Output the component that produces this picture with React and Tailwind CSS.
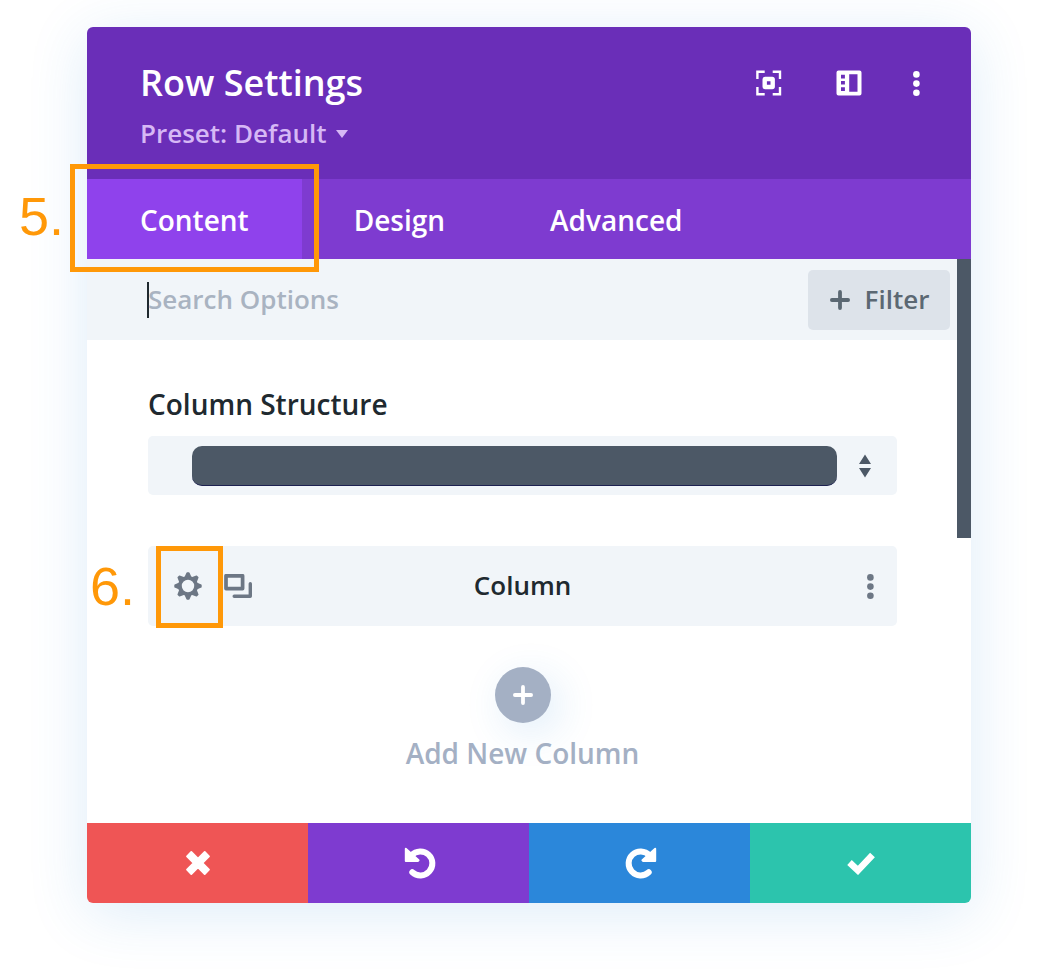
const tabs = ["Content", "Design", "Advanced"]

function Dots({ className }) {
  return (
    <svg className={className} viewBox="0 0 8 26" fill="currentColor" aria-hidden="true">
      <circle cx="4.4" cy="4.4" r="3.3" />
      <circle cx="4.4" cy="13.6" r="3.3" />
      <circle cx="4.4" cy="22.7" r="3.3" />
    </svg>
  )
}

function ExpandIcon() {
  return (
    <svg className="h-[26px] w-[26px]" viewBox="0 0 26 26" fill="none" stroke="currentColor" aria-hidden="true">
      <path strokeWidth="2.4" d="M1.4 9V1.7H8.7M16.7 1.7h7.3V9M24 17v7.3H16.7M8.7 24.3H1.4V17" />
      <rect x="8.7" y="9" width="8" height="8" rx="0.5" strokeWidth="4.4" strokeLinejoin="round" />
    </svg>
  )
}

function SidebarIcon() {
  return (
    <svg className="h-[26px] w-[26px]" viewBox="0 0 26 26" fill="currentColor" aria-hidden="true">
      <path
        fillRule="evenodd"
        d="M2.5 0.5h21a2 2 0 0 1 2 2v21a2 2 0 0 1-2 2h-21a2 2 0 0 1-2-2v-21a2 2 0 0 1 2-2zM13.2 4.3v17.4h8.3V4.3zM5 4.8v3.6h3.9V4.8zM5 11v3.6h3.9V11zM5 17.3v3.6h3.9v-3.6z"
      />
    </svg>
  )
}

function GearIcon() {
  const teeth = [0, 45, 90, 135, 180, 225, 270, 315]
  return (
    <svg className="h-7 w-7" viewBox="-14 -14 28 28" fill="none" stroke="currentColor" aria-hidden="true">
      <circle r="8.1" strokeWidth="3.8" />
      {teeth.map((angle) => (
        <path
          key={angle}
          d="M-2.7 -9L-0.9 -13H0.9L2.7 -9Z"
          fill="currentColor"
          strokeWidth="1.4"
          strokeLinejoin="round"
          transform={`rotate(${angle})`}
        />
      ))}
    </svg>
  )
}

function DuplicateIcon() {
  return (
    <svg className="h-6 w-7" viewBox="0 0 28 24" fill="none" stroke="currentColor" aria-hidden="true">
      <rect x="2" y="1.8" width="16.6" height="12.8" strokeWidth="3.7" strokeLinejoin="round" />
      <path d="M26.3 9.8v12.5H10.2" strokeWidth="3.4" strokeLinecap="round" strokeLinejoin="round" />
    </svg>
  )
}

function PlusIcon() {
  return (
    <svg className="h-5 w-5" viewBox="0 0 20 20" fill="none" stroke="currentColor" aria-hidden="true">
      <path d="M10 1.9v16.2M1.9 10h16.2" strokeWidth="3.8" strokeLinecap="round" />
    </svg>
  )
}

function UndoIcon({ className }) {
  return (
    <svg className={className} viewBox="0 0 32 32" fill="none" stroke="currentColor" aria-hidden="true">
      <path d="M7.6 8.2A12 12 0 1 1 8.3 25.3" strokeWidth="6" strokeLinecap="round" />
      <path
        d="M1.8 1.8L14.6 13.2L13.8 13.9H1.8Z"
        fill="currentColor"
        strokeWidth="2"
        strokeLinejoin="round"
      />
    </svg>
  )
}

export default function App() {
  return (
    <div className="relative h-[980px] w-[1044px] overflow-hidden bg-white pt-[27px] pl-[87px] font-['Open_Sans',sans-serif] text-[28px] font-semibold">
      <div className="flex h-[876px] w-[884px] flex-col overflow-hidden rounded-[6px] bg-white shadow-[0_10px_60px_rgba(43,135,218,0.16)]">
        <header className="flex h-[152px] shrink-0 justify-between bg-[#6a2eb8] pr-[51px] pl-[53px] text-white">
          <div className="pt-[31px]">
            <h1 className="text-[36px] leading-[50px]">Row Settings</h1>
            <button className="flex items-center text-[26px] leading-[50px] text-[#d6b8f5]">
              Preset: Default
              <svg className="mt-px ml-[9px] h-2 w-3" viewBox="0 0 12 8" fill="currentColor" aria-hidden="true">
                <path d="M0 0h12L6 8z" />
              </svg>
            </button>
          </div>
          <div className="mt-[43px] flex h-[26px] items-center">
            <ExpandIcon />
            <span className="w-[54px]" />
            <SidebarIcon />
            <span className="w-[50px]" />
            <Dots className="h-[26px] w-2" />
          </div>
        </header>

        <nav className="flex h-20 shrink-0 bg-[#7e3bd0] text-white">
          {tabs.map((tab, i) => (
            <button
              key={tab}
              className={i === 0 ? "bg-[#8f42ec] pt-0.5 pr-[53px] pl-[53px]" : "pt-0.5 pr-[53px] pl-[52px]"}
            >
              {tab}
            </button>
          ))}
        </nav>

        <div className="flex h-[564px] shrink-0">
          <main className="w-[870px]">
            <div className="flex h-[81px] items-center justify-between bg-[#f1f5f9] pr-[7px] pl-[60px]">
              <div className="flex items-center text-[26px] text-[#a9b3c1]">
                <span className="h-9 w-0.5 bg-[#20292f]" />
                <span className="-ml-px">Search Options</span>
              </div>
              <button className="flex h-[60px] w-[142px] items-center justify-center gap-[15px] rounded-[5px] bg-[#dde3ea] pl-px text-[26px] text-[#5b6873]">
                <PlusIcon />
                Filter
              </button>
            </div>

            <section className="flex flex-col pr-[60px] pl-[61px] pt-11">
              <h2 className="h-[52px] leading-[41px] text-[#20292f]">Column Structure</h2>
              <div className="flex h-[59px] items-center rounded-[5px] bg-[#f1f5f9] pl-11">
                <div className="h-10 w-[645px] rounded-[10px] border-b border-[#1d2150] bg-[#4c5866]" />
                <svg className="ml-[22px] h-6 w-3" viewBox="0 0 12 24" fill="#4c5866" aria-hidden="true">
                  <path d="M6 0.4l6 9.6H0zM0 14h12L6 23.6z" />
                </svg>
              </div>

              <div className="mt-[51px] grid h-20 grid-cols-[1fr_auto_1fr] items-center rounded-[5px] bg-[#f1f5f9] pr-[23px] pl-[26px] text-[#6d7785]">
                <div className="flex items-center gap-[22px]">
                  <GearIcon />
                  <DuplicateIcon />
                </div>
                <span className="pr-[3px] pb-0.5 text-[26px] text-[#20292f]">Column</span>
                <Dots className="h-[26px] w-2 justify-self-end" />
              </div>

              <div className="mt-[41px] flex flex-col items-center text-[#a4b0c4]">
                <button className="flex h-14 w-14 items-center justify-center rounded-full bg-[#a4b0c4] text-white shadow-[8px_10px_40px_rgba(43,135,218,0.15)]">
                  <PlusIcon />
                </button>
                <span className="mt-2.5 leading-10">Add New Column</span>
              </div>
            </section>
          </main>
          <div className="h-[279px] w-3.5 bg-[#4c5866]" />
        </div>

        <footer className="grid grow grid-cols-4 text-white">
          <button className="flex items-center justify-center bg-[#ef5555]">
            <svg className="h-[26px] w-[26px]" viewBox="0 0 26 26" fill="currentColor" stroke="currentColor" aria-hidden="true">
              <path
                d="M6.3 2L13 8.7L19.7 2L24 6.3L17.3 13L24 19.7L19.7 24L13 17.3L6.3 24L2 19.7L8.7 13L2 6.3Z"
                strokeWidth="1.8"
                strokeLinejoin="round"
              />
            </svg>
          </button>
          <button className="flex items-center justify-center bg-[#7e3bd0] pl-0.5">
            <UndoIcon className="h-8 w-8" />
          </button>
          <button className="flex items-center justify-center bg-[#2b87da] pl-0.5">
            <UndoIcon className="h-8 w-8 -scale-x-100" />
          </button>
          <button className="flex items-center justify-center bg-[#2cc4ad]">
            <svg className="h-6 w-[30px]" viewBox="0 0 30 24" fill="none" stroke="currentColor" aria-hidden="true">
              <path d="M3.5 11.5l8.4 7.9L26.5 4" strokeWidth="6.6" />
            </svg>
          </button>
        </footer>
      </div>

      {/* step markers laid over the modal */}
      <div className="absolute top-[164px] left-[70px] h-[108px] w-[249px] border-[5px] border-[#ff9808]" />
      <div className="absolute top-[546px] left-[156px] h-[82px] w-[67px] border-[5px] border-[#ff9808]" />
      <span className="absolute top-[186px] left-[19px] font-['Liberation_Sans',sans-serif] text-[54px] leading-[60px] font-normal text-[#ff9808]">
        5.
      </span>
      <span className="absolute top-[556px] left-[90px] font-['Liberation_Sans',sans-serif] text-[54px] leading-[60px] font-normal text-[#ff9808]">
        6.
      </span>
    </div>
  )
}
